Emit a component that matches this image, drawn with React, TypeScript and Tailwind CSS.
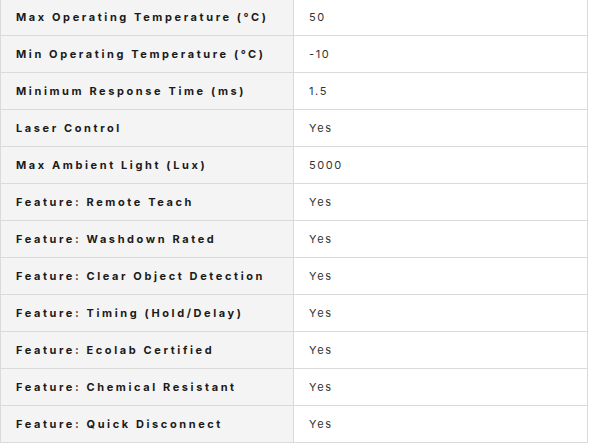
import React from "react";

const rows: [string, string][] = [
  ["Max Operating Temperature (°C)", "50"],
  ["Min Operating Temperature (°C)", "-10"],
  ["Minimum Response Time (ms)", "1.5"],
  ["Laser Control", "Yes"],
  ["Max Ambient Light (Lux)", "5000"],
  ["Feature: Remote Teach", "Yes"],
  ["Feature: Washdown Rated", "Yes"],
  ["Feature: Clear Object Detection", "Yes"],
  ["Feature: Timing (Hold/Delay)", "Yes"],
  ["Feature: Ecolab Certified", "Yes"],
  ["Feature: Chemical Resistant", "Yes"],
  ["Feature: Quick Disconnect", "Yes"],
];

export default function App() {
  return (
    <div className="w-[590px] h-[443px] overflow-hidden bg-white">
      <table className="-mt-[2px] w-[588px] border-collapse table-fixed" style={{ fontFamily: "Inter, 'Liberation Sans', sans-serif" }}>
        <colgroup>
          <col className="w-[293px]" />
          <col />
        </colgroup>
        <tbody>
          {rows.map(([k, v]) => (
            <tr key={k} className="h-[37px]">
              <td className="border border-[#dadada] bg-[#f4f4f4] pl-[15px] text-[11px] font-bold tracking-[2.6px] text-[#1a1a1a] whitespace-nowrap">
                {k}
              </td>
              <td className="border border-[#dadada] bg-white pl-[15px] text-[11px] tracking-[1.6px] text-[#333]">
                {v}
              </td>
            </tr>
          ))}
        </tbody>
      </table>
    </div>
  );
}
